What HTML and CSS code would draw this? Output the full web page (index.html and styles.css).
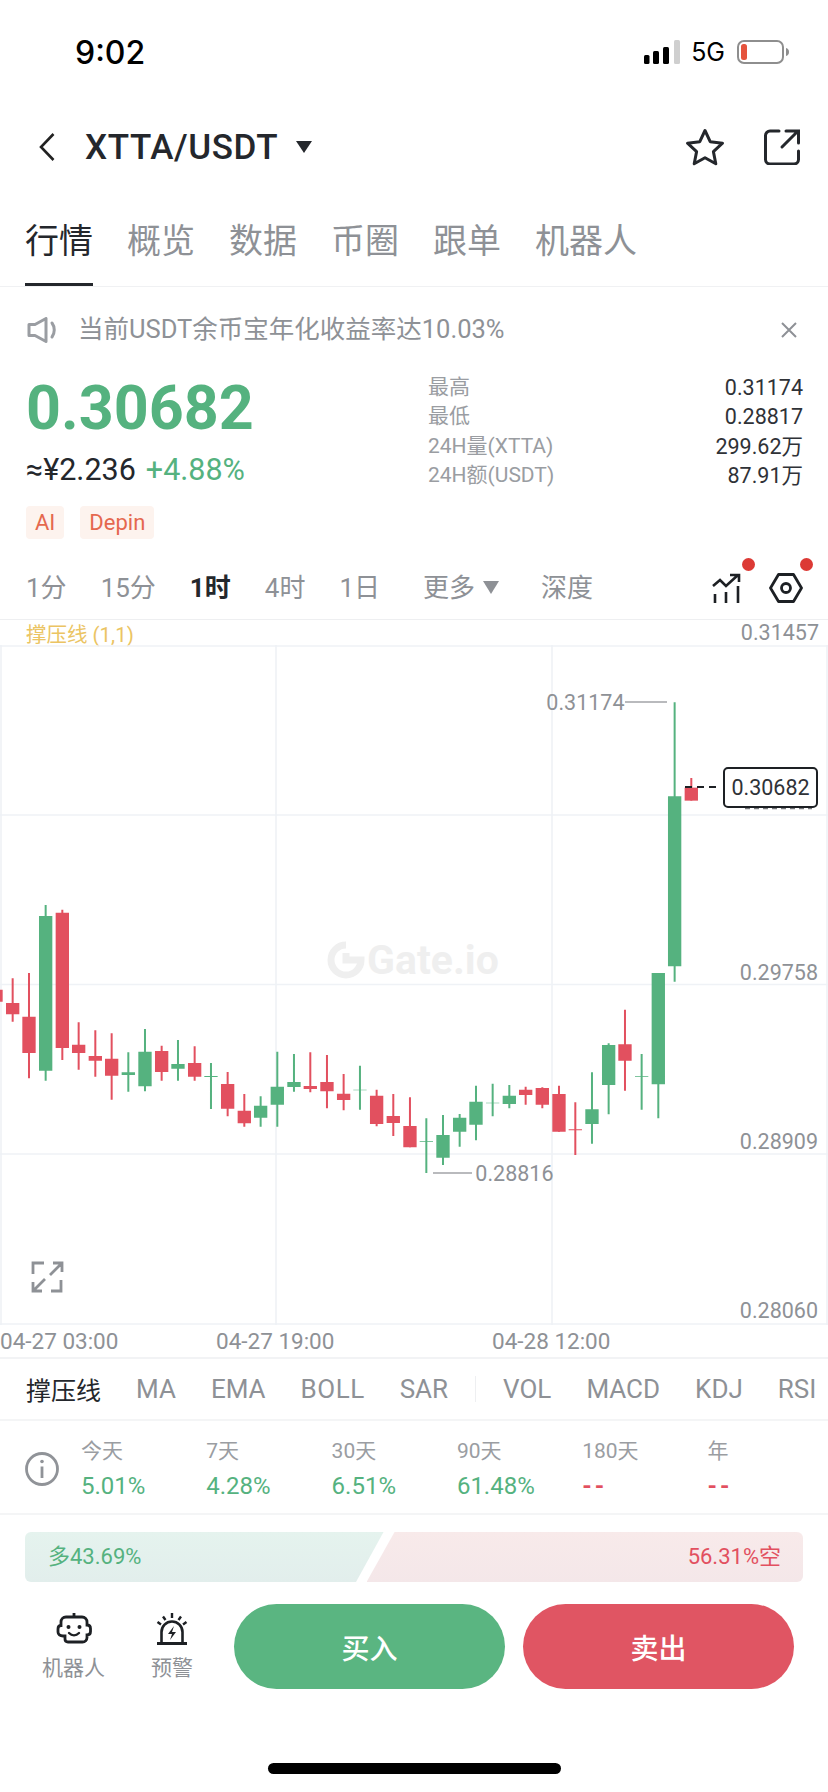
FILE: index.html
```html
<!DOCTYPE html>
<html lang="zh-CN">
<head>
    <meta charset="UTF-8">
    <meta name="viewport" content="width=device-width, initial-scale=1.0">
    <title>XTTA/USDT</title>
    <link rel="stylesheet" href="styles.css">
</head>
<body>

<div class="status-bar">
    <span class="clock">9:02</span>
    <div class="status-right">
        <svg class="signal" width="36" height="24" viewBox="0 0 36 24">
            <rect x="0" y="15" width="5.500" height="9" rx="1.500" fill="#000"/>
            <rect x="9" y="11" width="6" height="13" rx="1.500" fill="#000"/>
            <rect x="19" y="7" width="6" height="17" rx="1.500" fill="#000"/>
            <rect x="30" y="0" width="6" height="24" rx="1.500" fill="#cfcfcf"/>
        </svg>
        <span class="network">5G</span>
        <svg class="battery" width="52" height="24" viewBox="0 0 52 24">
            <rect x="1" y="1" width="45" height="22" rx="6" fill="none" stroke="#8e8e8e" stroke-width="2"/>
            <rect x="4" y="4" width="6" height="16" rx="2.500" fill="#e5533d"/>
            <path d="M49 8c2 .5 3 2 3 4s-1 3.500-3 4z" fill="#8e8e8e"/>
        </svg>
    </div>
</div>

<div class="nav">
    <svg class="back" width="16" height="28" viewBox="0 0 16 28">
        <path d="M14.500 1L2 14l12.500 13" fill="none" stroke="#222" stroke-width="2.600"/>
    </svg>
    <span class="pair">XTTA/USDT</span>
    <span class="caret"></span>
    <svg class="star" width="40" height="38" viewBox="0 0 40 38">
        <path d="M20 2.500l5.200 11.200 12.300 1.500-9.100 8.400 2.400 12.100L20 29.700 9.200 35.700l2.400-12.100-9.100-8.400 12.300-1.500z" fill="none" stroke="#24272c" stroke-width="3" stroke-linejoin="round"/>
    </svg>
    <svg class="share" width="36" height="36" viewBox="0 0 36 36">
        <path d="M15 2H6a4.500 4.500 0 0 0-4.500 4.500v24A4.500 4.500 0 0 0 6 35h24a4.500 4.500 0 0 0 4.500-4.500V22" fill="none" stroke="#24272c" stroke-width="3" stroke-linecap="round"/>
        <path d="M18 18L33 3M22 2h12.500v12" fill="none" stroke="#24272c" stroke-width="3" stroke-linecap="round"/>
    </svg>
</div>

<div class="tabs">
    <span class="tab active">行情</span>
    <span class="tab">概览</span>
    <span class="tab">数据</span>
    <span class="tab">币圈</span>
    <span class="tab">跟单</span>
    <span class="tab">机器人</span>
</div>

<div class="notice">
    <svg class="speaker" width="30" height="26" viewBox="0 0 30 26">
        <path d="M2 7.500h6L19 1.500v23L8 18.500H2z" fill="none" stroke="#9a9da2" stroke-width="3" stroke-linejoin="round"/>
        <path d="M25 6c3 4 3 10 0 14" fill="none" stroke="#9a9da2" stroke-width="3" stroke-linecap="round"/>
    </svg>
    <span class="notice-text">当前USDT余币宝年化收益率达10.03%</span>
    <svg class="close" width="16" height="16" viewBox="0 0 16 16">
        <path d="M1 1l14 14M15 1L1 15" stroke="#8e9196" stroke-width="2"/>
    </svg>
</div>

<div class="quote">
    <div class="quote-left">
        <div class="price">0.30682</div>
        <div class="price-sub">
            <span class="cny">≈¥2.236</span>
            <span class="change">+4.88%</span>
        </div>
        <div class="tags">
            <span class="tag">AI</span>
            <span class="tag">Depin</span>
        </div>
    </div>
    <div class="stats">
        <div class="stat"><span>最高</span><b>0.31174</b></div>
        <div class="stat"><span>最低</span><b>0.28817</b></div>
        <div class="stat"><span>24H量(XTTA)</span><b>299.62万</b></div>
        <div class="stat"><span>24H额(USDT)</span><b>87.91万</b></div>
    </div>
</div>

<div class="periods">
    <span class="period">1分</span>
    <span class="period">15分</span>
    <span class="period active">1时</span>
    <span class="period">4时</span>
    <span class="period">1日</span>
    <span class="period more">更多<i class="more-caret"></i></span>
    <span class="period depth">深度</span>
    <span class="tool-icon chart-type">
        <svg width="30" height="30" viewBox="0 0 30 30">
            <path d="M1 13l7-6 6 6L26 2M18 2h9v7" fill="none" stroke="#1d2024" stroke-width="2.600"/>
            <path d="M3 21v9M14 19v11M26 13v17" fill="none" stroke="#1d2024" stroke-width="2.600"/>
        </svg>
        <i class="dot"></i>
    </span>
    <span class="tool-icon settings">
        <svg width="34" height="30" viewBox="0 0 34 30">
            <path d="M9.500 1.500h15L32.500 15l-8 13.500h-15L1.500 15z" fill="none" stroke="#1d2024" stroke-width="2.800" stroke-linejoin="round"/>
            <circle cx="17" cy="15" r="4.500" fill="none" stroke="#1d2024" stroke-width="2.800"/>
        </svg>
        <i class="dot"></i>
    </span>
</div>

<div class="legend">
    <span class="legend-name">撑压线 (1,1)</span>
    <span class="legend-price">0.31457</span>
</div>

<svg class="chart" width="828" height="680" viewBox="0 646 828 680">
    <!-- grid -->
    <path class="grid" d="M0 647H828M0 816H828M0 985.500H828M0 1155H828M0 1325H828M1 646V1326M276 646V1326M552 646V1326M827 646V1326"/>

    <!-- watermark -->
    <g class="watermark">
        <path d="M346 946a15 15 0 1 0 15 15h-15v-7" fill="none" stroke="#efefef" stroke-width="7"/>
        <text x="367" y="975">Gate.io</text>
    </g>

    <!-- candles, left part -->
    <g transform="translate(0 880) scale(.3333)">
        <path class="wick up" d="M137 78V605M385 520V638M435 450V637M534 483V605M633 552V690M782 652V743M832 518V743M882 525V638M1080 560V692"/>
        <path class="body up" d="M137 111V575M385 580V588M435 518V622M534 555V569M633 591V594M782 680V716M832 623V677M882 609V624M1080 632V634"/>
        <path class="wick down" d="M-12 300V368M38 298V428M87 282V598M187 92V543M236 430V572M286 454V593M335 463V662M485 500V605M584 502V605M683 579V712M733 645V743M931 520V640M981 528V688M1031 585V694M1130 632V742M1180 645V771M1230 655V805"/>
        <path class="body down" d="M-12 332V368M38 372V406M87 413V522M187 101V507M236 497V522M286 531V545M335 539V590M485 516V579M584 552V593M683 615V689M733 695V733M931 621V630M981 609V637M1031 644V663M1130 650V735M1180 711V732M1230 741V805"/>
    </g>

    <!-- candles, right part -->
    <g transform="translate(414 1000) scale(.3333)">
        <path class="wick up" d="M37 358V522M87 348V498M137 345V443M186 260V424M236 254V352M286 258V328M534 220V434M584 133V346M683 165V332M733 -10V358"/>
        <path class="body up" d="M37 427V429M87 408V476M137 356V398M186 308V377M236 311V313M286 290V315M534 331V375M584 138V258M683 232V234M733 -78V256"/>
        <path class="wick down" d="M335 263V317M385 265V328M435 260V398M484 310V468M633 32V275"/>
        <path class="body down" d="M335 272V288M385 267V317M435 285V398M484 391V394M633 136V185"/>
    </g>
    <g transform="translate(414 680) scale(.3333)">
        <path class="wick up" d="M782 70V908"/>
        <path class="body up" d="M782 352V862"/>
        <path class="wick down" d="M832 297V365"/>
        <path class="body down" d="M832 326V365"/>
    </g>

    <!-- high and low marks -->
    <path class="mark-line" d="M625 703H667M433 1174H472"/>
    <text class="axis-label mark" x="624.500" y="711">0.31174</text>
    <text class="axis-label mark" x="553.500" y="1182">0.28816</text>

    <!-- price scale -->
    <text class="axis-label" x="818" y="981">0.29758</text>
    <text class="axis-label" x="818" y="1150">0.28909</text>
    <text class="axis-label" x="818" y="1319">0.28060</text>

    <!-- current price -->
    <path class="last-line" d="M685 788H717"/>
    <path class="last-under" d="M745 809.500H812"/>
    <rect class="last-box" x="724" y="769" width="93" height="39" rx="4"/>
    <text class="last-text" x="770.500" y="796">0.30682</text>

    <!-- fullscreen -->
    <path class="expand" d="M33 1275V1264H44M62 1264L50 1276M53 1264H62V1273M33 1292L45 1280M33 1283V1292H42M51 1292H61V1281"/>
</svg>

<div class="dates">
    <span>04-27 03:00</span>
    <span>04-27 19:00</span>
    <span>04-28 12:00</span>
</div>

<div class="indicators">
    <span class="indicator active">撑压线</span>
    <span class="indicator">MA</span>
    <span class="indicator">EMA</span>
    <span class="indicator wide">BOLL</span>
    <span class="indicator">SAR</span>
    <i class="divider"></i>
    <span class="indicator">VOL</span>
    <span class="indicator">MACD</span>
    <span class="indicator">KDJ</span>
    <span class="indicator">RSI</span>
</div>

<div class="returns">
    <svg class="info" width="34" height="34" viewBox="0 0 34 34">
        <circle cx="17" cy="17" r="15.500" fill="none" stroke="#909398" stroke-width="2.800"/>
        <path d="M17 14.500V26" stroke="#909398" stroke-width="2.800"/>
        <circle cx="17" cy="9.500" r="1.800" fill="#909398"/>
    </svg>
    <div class="return"><span>今天</span><b>5.01%</b></div>
    <div class="return"><span>7天</span><b>4.28%</b></div>
    <div class="return"><span>30天</span><b>6.51%</b></div>
    <div class="return"><span>90天</span><b>61.48%</b></div>
    <div class="return"><span>180天</span><b class="none">--</b></div>
    <div class="return"><span>年</span><b class="none">--</b></div>
</div>

<div class="sentiment">
    <div class="long">多43.69%</div>
    <div class="short">56.31%空</div>
</div>

<div class="actions">
    <div class="shortcut">
        <svg width="36" height="32" viewBox="0 0 36 32">
            <path d="M18 0V4" fill="none" stroke="#1d2024" stroke-width="2.800"/>
            <path d="M10 4h16c3 0 5 2 5 5v3c2 0 3.500 1 3.500 3.500v3c0 2.500-1.500 3.500-3.500 3.500v2.500c0 2.500-2 4.500-4.500 4.500H12c-2 0-3-1-3-3v-3H7c-3 0-5-1.500-5-4v-3c0-2 1-3.500 3-3.500V9c0-3 2-5 5-5z" fill="none" stroke="#1d2024" stroke-width="2.800"/>
            <circle cx="12.500" cy="14" r="2" fill="#1d2024"/>
            <circle cx="23.500" cy="14" r="2" fill="#1d2024"/>
            <path d="M13 20c3 3 7 3 10 0" fill="none" stroke="#1d2024" stroke-width="2.400" stroke-linecap="round"/>
        </svg>
        <span>机器人</span>
    </div>
    <div class="shortcut">
        <svg width="32" height="32" viewBox="0 0 32 32">
            <path d="M16 0V5M7 3.500l2.500 3.500M25 3.500L22.500 7M1.500 9l3.500 2.500M30.500 9L27 11.500" stroke="#1d2024" stroke-width="2.400"/>
            <path d="M5.500 29V19a10.500 10.500 0 0 1 21 0v10" fill="none" stroke="#1d2024" stroke-width="2.600"/>
            <path d="M1 30.500H31" stroke="#1d2024" stroke-width="3"/>
            <path d="M18 13l-6 8h4l-2 6 6-8h-4z" fill="#1d2024"/>
        </svg>
        <span>预警</span>
    </div>
    <button class="trade buy">买入</button>
    <button class="trade sell">卖出</button>
</div>

<div class="home-bar"></div>

</body>
</html>
```

FILE: styles.css
```css
* {
    box-sizing: border-box;
}
body {
    margin: 0;
    width: 828px;
    height: 1792px;
    overflow: hidden;
    background-color: #fff;
    color: #24272c;
    font-family: Roboto, "Noto Sans CJK SC", sans-serif;
}
svg {
    display: block;
    flex: none;
}

/* status bar */
.status-bar {
    display: flex;
    justify-content: space-between;
    align-items: center;
    height: 104px;
    padding: 0 39px 0 75px;
}
.clock {
    font-family: Inter, sans-serif;
    font-size: 32px;
    font-weight: 500;
    color: #000;
}
.status-right {
    display: flex;
    align-items: center;
}
.network {
    margin: 0 12px 0 11px;
    font-family: Inter, sans-serif;
    font-size: 25px;
    color: #000;
}

/* nav */
.nav {
    display: flex;
    align-items: center;
    height: 86px;
    padding: 0 28px 0 39px;
}
.pair {
    margin-left: 30px;
    font-size: 35px;
    font-weight: 500;
    letter-spacing: .6px;
}
.caret {
    width: 0;
    height: 0;
    margin-left: 18px;
    border-left: 8px solid transparent;
    border-right: 8px solid transparent;
    border-top: 12px solid #24272c;
}
.star {
    margin-left: auto;
}
.share {
    margin-left: 39px;
}

/* tabs */
.tabs {
    display: flex;
    gap: 34px;
    height: 97px;
    padding: 29px 25px 0;
    border-bottom: 1px solid #f0f1f3;
}
.tab {
    height: 67px;
    padding-bottom: 20px;
    font-size: 34px;
    line-height: 44px;
    color: #8e9196;
}
.tab.active {
    color: #24272c;
    border-bottom: 3px solid #24272c;
}

/* notice */
.notice {
    display: flex;
    align-items: center;
    height: 86px;
    padding: 0 31px 0 27px;
    color: #8e9196;
    font-size: 25.500px;
}
.notice-text {
    margin-left: 21px;
    padding-bottom: 8px;
}
.close {
    margin-left: auto;
}

/* quote */
.quote {
    display: flex;
    justify-content: space-between;
    padding: 0 25px 0 26px;
}
.price {
    padding-top: 1px;
    font-size: 61px;
    font-weight: 700;
    line-height: 68px;
    color: #55b27f;
}
.price-sub {
    display: flex;
    gap: 10px;
    margin-top: 8px;
    font-size: 30.500px;
    line-height: 40px;
}
.change {
    color: #55b27f;
}
.tags {
    display: flex;
    gap: 16px;
    margin-top: 16px;
}
.tag {
    height: 33px;
    padding: 0 9px;
    border-radius: 4px;
    background-color: #fdf3ee;
    color: #e5684f;
    font-size: 22px;
    line-height: 33px;
}
.stats {
    width: 375px;
}
.stat {
    display: flex;
    justify-content: space-between;
    height: 29.300px;
    font-size: 21px;
    line-height: 29.300px;
    color: #9a9da2;
}
.stat b {
    font-size: 21.500px;
    font-weight: 400;
    color: #2f3237;
}

/* periods */
.periods {
    display: flex;
    align-items: center;
    gap: 34px;
    height: 81px;
    padding: 29px 25px 12px 26px;
    border-bottom: 1px solid #eeeff1;
    font-size: 26px;
    line-height: 40px;
    color: #8e9196;
}
.period.active {
    font-weight: 700;
    color: #24272c;
}
.period.more {
    display: flex;
    align-items: center;
    margin-left: 9px;
}
.more-caret {
    width: 0;
    height: 0;
    margin-left: 8px;
    border-left: 8px solid transparent;
    border-right: 8px solid transparent;
    border-top: 13px solid #8e9196;
}
.period.depth {
    margin-left: 8px;
}
.tool-icon {
    position: relative;
    display: block;
}
.chart-type {
    margin-left: auto;
}
.settings {
    margin-left: -7px;
}
.dot {
    position: absolute;
    top: -15px;
    right: -13px;
    width: 13px;
    height: 13px;
    border-radius: 50%;
    background-color: #dc3a35;
}
.settings .dot {
    right: -10px;
}

/* legend */
.legend {
    display: flex;
    justify-content: space-between;
    align-items: center;
    height: 25px;
    padding: 0 9px 0 26px;
    font-size: 21.500px;
}
.legend-name {
    font-size: 20.500px;
    color: #ebc463;
}
.legend-price {
    color: #8e9196;
}

/* chart */
.grid {
    fill: none;
    stroke: #eff2f6;
    stroke-width: 1.600;
}
.watermark {
    fill: #efefef;
    font-size: 41px;
    font-weight: 700;
}
.wick {
    fill: none;
    stroke-width: 6;
}
.body {
    fill: none;
    stroke-width: 40;
}
.up {
    stroke: #55b27f;
}
.down {
    stroke: #e2505f;
}
.mark-line {
    fill: none;
    stroke: #a2a4a8;
    stroke-width: 1.500;
}
.axis-label {
    fill: #8e9196;
    font-size: 21.500px;
    text-anchor: end;
}
.last-line {
    fill: none;
    stroke: #1d2024;
    stroke-width: 2;
    stroke-dasharray: 7 5;
}
.last-under {
    fill: none;
    stroke: #77797d;
    stroke-width: 1.500;
    stroke-dasharray: 5 4;
}
.last-box {
    fill: #fff;
    stroke: #1d2024;
    stroke-width: 2;
}
.last-text {
    fill: #2f3237;
    font-size: 21.500px;
    text-anchor: middle;
}
.expand {
    fill: none;
    stroke: #8e9196;
    stroke-width: 2.800;
}

/* dates */
.dates {
    display: grid;
    grid-template-columns: 216px 276px 1fr;
    height: 34px;
    border-bottom: 2px solid #f2f3f5;
    font-size: 22.500px;
    line-height: 32px;
    color: #8e9196;
}

/* indicators */
.indicators {
    display: flex;
    align-items: center;
    gap: 35px;
    height: 62px;
    padding: 0 0 0 26px;
    border-bottom: 2px solid #f4f5f6;
    font-size: 26px;
    color: #8e9196;
}
.indicator.active {
    font-size: 25px;
    color: #24272c;
}
.indicator.wide {
    letter-spacing: .5px;
}
.divider {
    width: 1px;
    height: 26px;
    margin: 0 -8px;
    background-color: #eeeff1;
}

/* returns */
.returns {
    display: grid;
    grid-template-columns: 56px repeat(6, 125.300px);
    align-items: center;
    height: 94px;
    padding: 4px 0 0 25px;
    border-bottom: 2px solid #f4f5f6;
}
.return {
    display: flex;
    flex-direction: column;
    gap: 10px;
}
.return span {
    font-size: 21px;
    line-height: 24px;
    color: #9a9da2;
}
.return b {
    font-size: 24px;
    font-weight: 400;
    line-height: 26px;
    color: #55b27f;
}
.return b.none {
    font-weight: 700;
    letter-spacing: 3px;
    color: #e2505f;
}

/* long short bar */
.sentiment {
    display: flex;
    height: 50px;
    margin: 17px 25px 0;
    font-size: 22px;
    line-height: 50px;
}
.long {
    width: 359px;
    padding-left: 23px;
    border-radius: 6px 0 0 6px;
    background: linear-gradient(#e5f3ee, #e2eeec);
    color: #55b27f;
    clip-path: polygon(0 0, 100% 0, 331px 100%, 0 100%);
}
.short {
    width: 437px;
    margin-left: -17px;
    padding-right: 22px;
    border-radius: 0 6px 6px 0;
    background: linear-gradient(#f8eaea, #f4e7e9);
    color: #e2505f;
    text-align: right;
    clip-path: polygon(28px 0, 100% 0, 100% 100%, 0 100%);
}

/* bottom actions */
.actions {
    display: flex;
    align-items: flex-start;
    height: 181px;
    padding: 22px 0 0 42px;
    background-color: #fff;
}
.shortcut {
    display: flex;
    flex-direction: column;
    align-items: center;
    width: 63px;
    padding-top: 9px;
    font-size: 21px;
    color: #8e9196;
}
.shortcut + .shortcut {
    width: 42px;
    margin-left: 46px;
}
.shortcut span {
    margin-top: 8px;
    line-height: 30px;
    white-space: nowrap;
}
.trade {
    width: 271px;
    height: 85px;
    border: none;
    border-radius: 43px;
    color: #fff;
    font-family: inherit;
    font-size: 28px;
    font-weight: 500;
}
.buy {
    margin-left: 41px;
    background-color: #5ab581;
}
.sell {
    margin-left: 18px;
    background-color: #e05563;
}
.home-bar {
    width: 293px;
    height: 11px;
    margin: 0 auto;
    border-radius: 6px;
    background-color: #000;
}
```
